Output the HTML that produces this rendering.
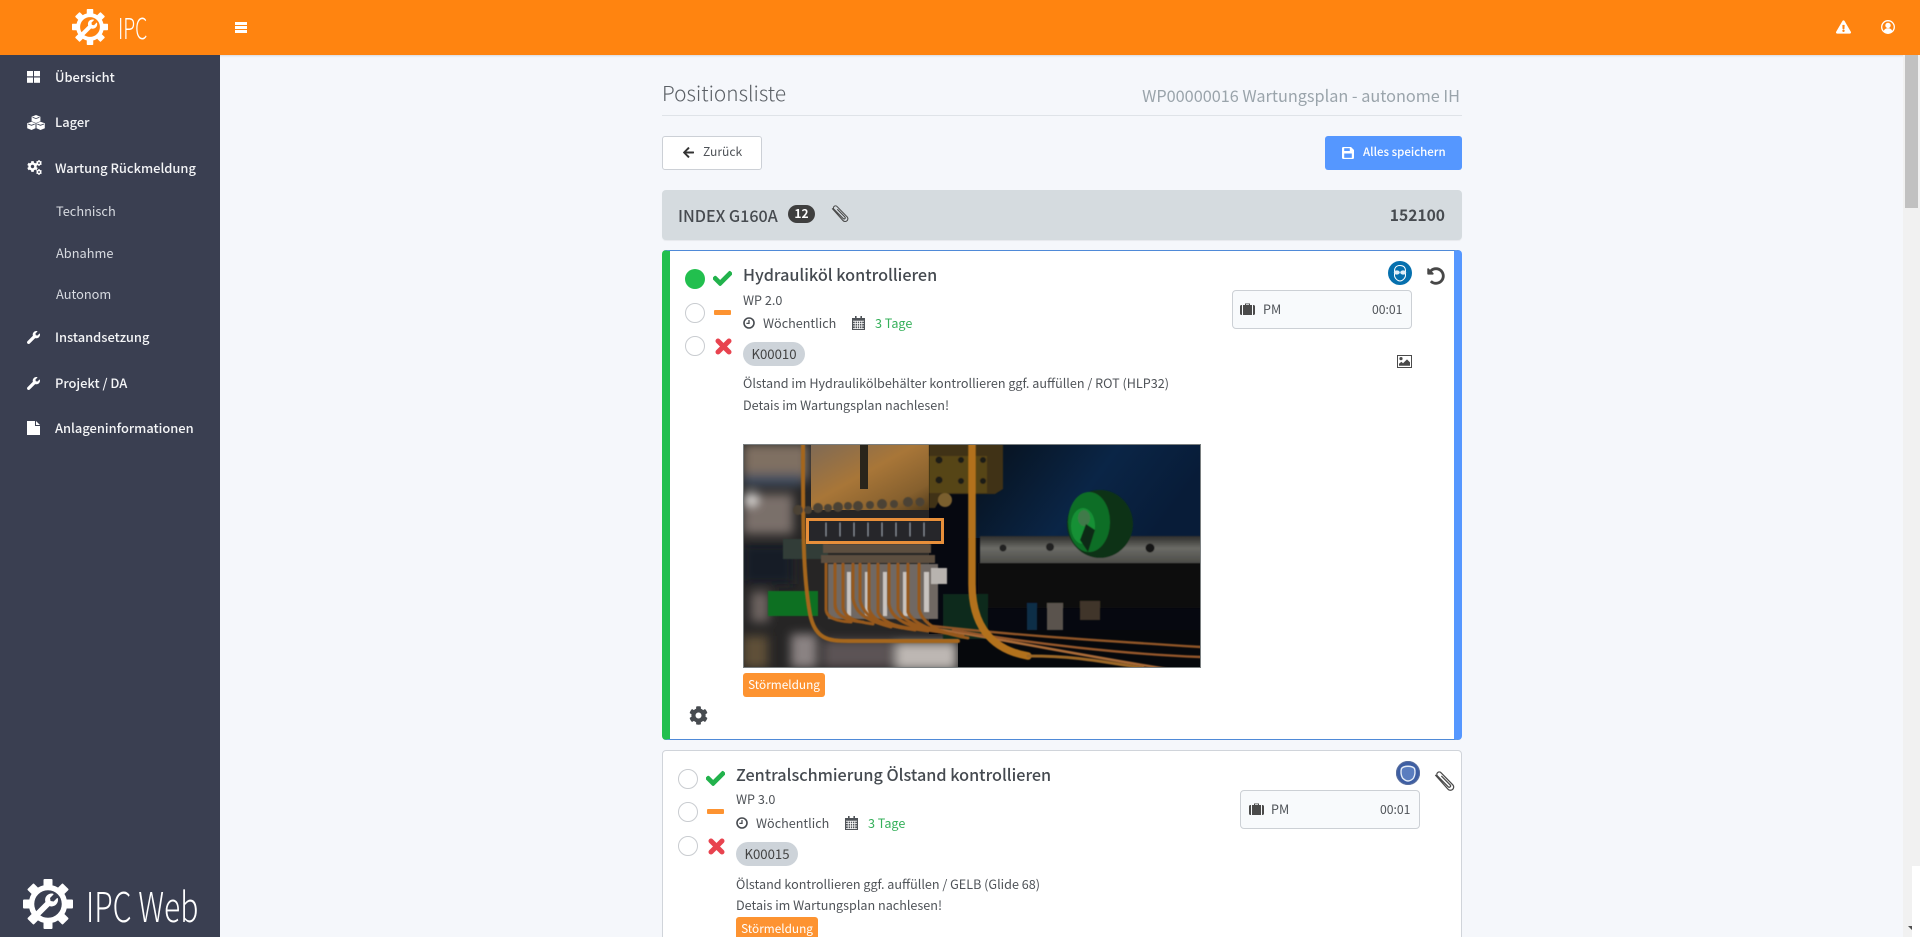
<!DOCTYPE html>
<html lang="de"><head><meta charset="utf-8"><title>Positionsliste</title>
<style>
html,body{margin:0;padding:0;width:1920px;height:937px;overflow:hidden;background:#f5f7fb}
body{font-family:"Noto Sans CJK JP","Liberation Sans",sans-serif;color:#4a4a4a;position:relative}
.a{position:absolute}
.t{position:absolute;white-space:nowrap;line-height:20px;height:20px}
svg{position:absolute;display:block;overflow:visible}
.nav{color:#f4f5f7;font-size:12.9px;font-weight:500}
.sub{color:#d8dbe1;font-size:12.8px}
.s13{font-size:12.6px;color:#4f5358}
.radio{position:absolute;width:18px;height:18px;border:1px solid #c9ccd0;border-radius:50%;background:#fff}
.tag{position:absolute;width:62px;height:24px;border-radius:12px;background:#cdd3d9;color:#444;font-size:13.2px;line-height:24px;text-align:center}
.stor{position:absolute;width:82px;height:24px;border-radius:3px;background:#fd9331;color:#fff;font-size:11.8px;line-height:23px;text-align:center}
.pm{position:absolute;width:178px;height:37px;border:1px solid #ccd0d5;border-radius:4px;background:#f8fafc}
</style></head><body>
<svg width="0" height="0" style="position:absolute">
<defs>
<symbol id="wrench" viewBox="0 0 512 512"><path d="M507.73 109.1c-2.24-9.03-13.54-12.09-20.12-5.51l-74.36 74.36-67.88-11.31-11.31-67.88 74.36-74.36c6.62-6.62 3.43-17.9-5.66-20.16-47.38-11.74-99.55.91-136.58 37.93-39.64 39.64-50.55 97.1-34.05 147.2L18.74 402.76c-24.99 24.99-24.99 65.51 0 90.5 24.99 24.99 65.51 24.99 90.5 0l213.21-213.21c50.12 16.71 107.47 5.68 147.37-34.22 37.07-37.07 49.7-89.32 37.91-136.73z"/></symbol>
<symbol id="check" viewBox="0 0 512 512"><path d="M173.898 439.404l-166.4-166.4c-9.997-9.997-9.997-26.206 0-36.204l36.203-36.204c9.997-9.998 26.207-9.998 36.204 0L192 312.69 432.095 72.596c9.997-9.997 26.207-9.997 36.204 0l36.203 36.204c9.997 9.997 9.997 26.206 0 36.204l-294.4 294.401c-9.998 9.997-26.207 9.997-36.204-.001z"/></symbol>
<symbol id="cog" viewBox="0 0 512 512"><path d="M487.4 315.7l-42.6-24.6c4.3-23.2 4.3-47 0-70.2l42.6-24.6c4.9-2.8 7.1-8.6 5.5-14-11.1-35.6-30-67.8-54.7-94.6-3.8-4.1-10-5.1-14.8-2.3L380.8 110c-17.9-15.4-38.5-27.3-60.8-35.1V25.8c0-5.6-3.9-10.5-9.4-11.7-36.7-8.2-74.3-7.8-109.2 0-5.5 1.2-9.4 6.1-9.4 11.7V75c-22.2 7.9-42.8 19.8-60.8 35.1L88.7 85.5c-4.9-2.8-11-1.9-14.8 2.3-24.7 26.7-43.6 58.9-54.7 94.6-1.7 5.4.6 11.2 5.5 14L67.3 221c-4.3 23.2-4.3 47 0 70.2l-42.6 24.6c-4.9 2.8-7.1 8.6-5.5 14 11.1 35.6 30 67.8 54.7 94.6 3.8 4.1 10 5.1 14.8 2.3l42.6-24.6c17.9 15.4 38.5 27.3 60.8 35.1v49.2c0 5.6 3.9 10.5 9.4 11.7 36.7 8.2 74.3 7.8 109.2 0 5.5-1.2 9.4-6.1 9.4-11.7v-49.2c22.2-7.9 42.8-19.8 60.8-35.1l42.6 24.6c4.9 2.8 11 1.9 14.8-2.3 24.7-26.7 43.6-58.9 54.7-94.6 1.5-5.5-.7-11.3-5.6-14.1zM256 336c-44.1 0-80-35.9-80-80s35.9-80 80-80 80 35.9 80 80-35.9 80-80 80z"/></symbol>
<symbol id="undo" viewBox="0 0 512 512"><path d="M255.545 8c-66.269.119-126.438 26.233-170.86 68.685L48.971 40.971C33.851 25.851 8 36.559 8 57.941V192c0 13.255 10.745 24 24 24h134.059c21.382 0 32.09-25.851 16.971-40.971l-41.75-41.75c30.864-28.899 70.801-44.907 113.23-45.273 92.398-.798 170.283 73.977 169.484 169.442C423.236 348.009 349.816 424 256 424c-41.127 0-79.997-14.678-110.63-41.556-4.743-4.161-11.906-3.908-16.368.553L89.34 422.659c-4.872 4.872-4.631 12.815.482 17.433C133.798 479.813 192.074 504 256 504c136.966 0 247.999-111.033 248-247.998C504.001 119.193 392.354 7.755 255.545 8z"/></symbol>
<symbol id="warn" viewBox="0 0 576 512"><path d="M569.517 440.013C587.975 472.007 564.806 512 527.94 512H48.054c-36.937 0-59.999-40.055-41.577-71.987L246.423 24c18.467-32.009 64.72-31.951 83.154 0l239.94 416.013zM288 354c-25.405 0-46 20.595-46 46s20.595 46 46 46 46-20.595 46-46-20.595-46-46-46zm-43.673-165.346l7.418 136c.347 6.364 5.609 11.346 11.982 11.346h48.546c6.373 0 11.635-4.982 11.982-11.346l7.418-136c.375-6.874-5.098-12.654-11.982-12.654h-63.383c-6.884 0-12.356 5.78-11.981 12.654z"/></symbol>
<symbol id="back" viewBox="0 0 448 512"><path d="M257.5 445.1l-22.2 22.2c-9.4 9.4-24.6 9.4-33.9 0L7 273c-9.4-9.4-9.4-24.6 0-33.9L201.4 44.7c9.4-9.4 24.6-9.4 33.9 0l22.2 22.2c9.5 9.5 9.3 25-.4 34.3L136.6 216H424c13.3 0 24 10.7 24 24v32c0 13.3-10.7 24-24 24H136.6l120.5 114.8c9.8 9.3 10 24.8.4 34.3z"/></symbol>
<symbol id="clip" viewBox="0 0 16 16"><path fill="none" stroke="currentColor" stroke-width=".95" d="M1 3 L10.6 13.8 A2.4 2.4 0 0 0 14.4 10.6 L5.4 1.4 A1.8 1.8 0 0 0 2.6 3.8 L10.8 12 A.9.9 0 0 0 12.4 10.7 L5.6 3.8"/></symbol>
<symbol id="clock" viewBox="0 0 12 12"><circle cx="6" cy="6" r="5" fill="none" stroke="currentColor" stroke-width="1.6"/><path d="M6 3v3.4H3.4" fill="none" stroke="currentColor" stroke-width="1.3"/></symbol>
<symbol id="cal" viewBox="0 0 13 14"><path fill="currentColor" d="M0 2h3V0h1.6v2h3.8V0H10v2h3v12H0z"/><path stroke="#fff" stroke-width=".8" d="M1 5.2h11M1 7.6h11M1 10h11M1 12.4h11M3.2 5v8M5.4 5v8M7.6 5v8M9.8 5v8" fill="none"/></symbol>
<symbol id="bag" viewBox="0 0 15 12"><path fill="currentColor" d="M5 2V.5h5V2h-1V1.3H6V2zM3 2h9v10H3zM0 3.4C0 2.6.6 2 1.4 2H2v10h-.6C.6 12 0 11.4 0 10.6zM13 2h.6c.8 0 1.4.6 1.4 1.4v7.2c0 .8-.6 1.4-1.4 1.4H13z"/></symbol>
<symbol id="pic" viewBox="0 0 15 13"><path fill="#4a4a4a" d="M0 0h15v13H0z"/><path fill="#fff" d="M1 1h13v11H1z"/><circle cx="4" cy="3.6" r="1.6" fill="#4a4a4a"/><path fill="#4a4a4a" d="M2 10.8V8.8l2.4-2 1.6 1.4L10 4.4l3 3v3.4z"/></symbol>
<symbol id="gear" viewBox="-50 -50 100 100">
<g fill="#fff"><rect x="-9" y="-50" width="18" height="14" rx="2"/><rect x="-9" y="-50" width="18" height="14" rx="2" transform="rotate(45)"/><rect x="-9" y="-50" width="18" height="14" rx="2" transform="rotate(90)"/><rect x="-9" y="-50" width="18" height="14" rx="2" transform="rotate(135)"/><rect x="-9" y="-50" width="18" height="14" rx="2" transform="rotate(180)"/><rect x="-9" y="-50" width="18" height="14" rx="2" transform="rotate(225)"/><rect x="-9" y="-50" width="18" height="14" rx="2" transform="rotate(270)"/><rect x="-9" y="-50" width="18" height="14" rx="2" transform="rotate(315)"/></g>
<circle r="33" fill="none" stroke="#fff" stroke-width="11"/>
<path fill="#fff" transform="translate(-26,-21) scale(.09)" d="M507.73 109.1c-2.24-9.03-13.54-12.09-20.12-5.51l-74.36 74.36-67.88-11.31-11.31-67.88 74.36-74.36c6.62-6.62 3.43-17.9-5.66-20.16-47.38-11.74-99.55.91-136.58 37.93-39.64 39.64-50.55 97.1-34.05 147.2L18.74 402.76c-24.99 24.99-24.99 65.51 0 90.5 24.99 24.99 65.51 24.99 90.5 0l213.21-213.21c50.12 16.71 107.47 5.68 147.37-34.22 37.07-37.07 49.7-89.32 37.91-136.73z"/>
</symbol>
<filter id="b1" x="-5%" y="-5%" width="110%" height="110%"><feGaussianBlur stdDeviation=".6"/></filter>
<filter id="b4" x="-30%" y="-30%" width="160%" height="160%"><feGaussianBlur stdDeviation="5"/></filter>
<linearGradient id="brass" x1="0" y1="0" x2="1" y2="1"><stop offset="0" stop-color="#7f6a55"/><stop offset=".45" stop-color="#a87638"/><stop offset=".8" stop-color="#86602e"/><stop offset="1" stop-color="#523c1c"/></linearGradient>
<linearGradient id="darkblue" x1="0" y1="0" x2="1" y2=".3"><stop offset="0" stop-color="#070f18"/><stop offset=".6" stop-color="#0a2546"/><stop offset="1" stop-color="#081c38"/></linearGradient>
<linearGradient id="strip" x1="0" y1="0" x2="0" y2="1"><stop offset="0" stop-color="#2e2e2c"/><stop offset=".45" stop-color="#6b6b66"/><stop offset="1" stop-color="#4c4c48"/></linearGradient>
</defs></svg>

<!-- header -->
<div class="a" style="left:0;top:0;width:1920px;height:55px;background:#ff8410;box-shadow:0 1px 2px rgba(0,0,0,.12)"></div>
<svg style="left:72px;top:9px" width="36" height="36"><use href="#gear" width="36" height="36"/></svg>
<div class="t" style="left:118px;top:14px;height:26px;line-height:26px;font-size:29px;font-weight:300;color:#fff;transform:scaleX(.67);transform-origin:0 50%">IPC</div>
<div class="a" style="left:235px;top:22px;width:12px;height:2.5px;background:#fff"></div>
<div class="a" style="left:235px;top:26px;width:12px;height:2.5px;background:#fff"></div>
<div class="a" style="left:235px;top:30px;width:12px;height:2.5px;background:#fff"></div>
<svg style="left:1836px;top:20px;fill:#fff" width="15" height="14"><use href="#warn" width="15" height="14"/></svg>
<svg style="left:1881px;top:20px" width="14" height="14" viewBox="0 0 14 14"><circle cx="7" cy="7" r="6.3" fill="none" stroke="#fff" stroke-width="1.3"/><circle cx="7" cy="5.4" r="2.7" fill="#fff"/><path d="M2.6 11.4c.6-2.4 2.4-3.2 4.4-3.2s3.8.8 4.4 3.2C10 13 8.5 13.5 7 13.5S4 13 2.6 11.4z" fill="#fff"/></svg>

<!-- sidebar -->
<div class="a" style="left:0;top:55px;width:220px;height:882px;background:#3a3f51"></div>
<svg style="left:27px;top:71px;fill:#fff" width="13" height="12"><rect width="6" height="5.3"/><rect x="7" width="6" height="5.3"/><rect y="6.5" width="6" height="5.3"/><rect x="7" y="6.5" width="6" height="5.3"/></svg>
<div class="t nav" style="left:55px;top:67px">Übersicht</div>
<svg style="left:27px;top:115px;fill:#fff" width="18" height="15" viewBox="0 0 18 15"><path d="M9 0l4.400 1.700v4.600L9 8 4.600 6.300V1.700zM4.500 6.700l4 1.600v4.900l-4 1.800-4.300-1.800V8.300zM13.500 6.700l4.300 1.600v4.900l-4.300 1.800-4-1.800V8.300z"/><path d="M5.600 2.300l3.400 1.300 3.400-1.300M1 9l3.500 1.300 3.300-1.300M10.200 9l3.300 1.300 3.500-1.300" fill="none" stroke="#3a3f51" stroke-width=".8"/></svg>
<div class="t nav" style="left:55px;top:112px">Lager</div>
<svg style="left:27px;top:161px;fill:#fff" width="11" height="11"><use href="#cog" width="11" height="11"/></svg>
<svg style="left:36px;top:160px;fill:#fff" width="6" height="6"><use href="#cog" width="6" height="6"/></svg>
<svg style="left:36px;top:169px;fill:#fff" width="6" height="6"><use href="#cog" width="6" height="6"/></svg>
<div class="t nav" style="left:55px;top:158px">Wartung Rückmeldung</div>
<div class="t sub" style="left:56px;top:201px">Technisch</div>
<div class="t sub" style="left:56px;top:243px">Abnahme</div>
<div class="t sub" style="left:56px;top:284px">Autonom</div>
<svg style="left:27px;top:331px;fill:#fff" width="13" height="13"><use href="#wrench" width="13" height="13"/></svg>
<div class="t nav" style="left:55px;top:327px">Instandsetzung</div>
<svg style="left:27px;top:377px;fill:#fff" width="13" height="13"><use href="#wrench" width="13" height="13"/></svg>
<div class="t nav" style="left:55px;top:373px">Projekt / DA</div>
<svg style="left:27px;top:421px;fill:#fff" width="13" height="14" viewBox="0 0 13 14"><path d="M0 0h8v5h5v9H0zM9 0l4 4H9z"/></svg>
<div class="t nav" style="left:55px;top:418px">Anlageninformationen</div>
<svg style="left:23px;top:879px" width="50" height="50"><use href="#gear" width="50" height="50"/></svg>
<div class="t" style="left:86px;top:884px;height:40px;line-height:40px;font-size:41px;font-weight:300;color:#fff;transform:scaleX(.735);transform-origin:0 50%">IPC Web</div>

<!-- page head -->
<div class="t" style="left:662px;top:77px;height:30px;line-height:30px;font-size:20.8px;font-weight:300;color:#5b6066">Positionsliste</div>
<div class="t" style="right:460px;top:84px;height:22px;line-height:22px;font-size:16.25px;color:#9aa4ab">WP00000016 Wartungsplan - autonome IH</div>
<div class="a" style="left:662px;top:115px;width:800px;height:1px;background:#dfe3e8"></div>

<div class="a" style="left:662px;top:136px;width:98px;height:32px;background:#fff;border:1px solid #ccd0d6;border-radius:3px"></div>
<svg style="left:683px;top:146px;fill:#333" width="11" height="13"><use href="#back" width="11" height="13"/></svg>
<div class="t" style="left:703px;top:142px;font-size:12.1px;color:#4f5358">Zurück</div>

<div class="a" style="left:1325px;top:136px;width:137px;height:34px;background:#5597ff;border-radius:3px"></div>
<svg style="left:1342px;top:147px" width="12" height="12" viewBox="0 0 12 12"><path fill="#fff" d="M0 1.200C0 .5.5 0 1.200 0H9L12 3v7.800c0 .7-.5 1.200-1.200 1.200H1.200C.5 12 0 11.500 0 10.800z"/><rect x="2.200" y="1.200" width="5.600" height="2.800" fill="#5597ff"/><rect x="2.200" y="6.500" width="7.600" height="4.300" fill="#5597ff"/></svg>
<div class="t" style="left:1363px;top:142px;font-size:11.5px;color:#fff;font-weight:500">Alles speichern</div>

<!-- group bar -->
<div class="a" style="left:662px;top:190px;width:800px;height:50px;background:#d5dbdf;border-radius:4px;box-shadow:0 1px 1px rgba(0,0,0,.06)"></div>
<div class="t" style="left:678px;top:205px;font-size:16.1px;font-weight:500;color:#474b50">INDEX G160A</div>
<div class="a" style="left:788px;top:205px;width:27px;height:18px;border-radius:9px;background:#3f3f3f;color:#fff;font-size:12px;font-weight:700;line-height:17px;text-align:center">12</div>
<svg style="left:831px;top:205px;color:#4a4a4a" width="18" height="18"><use href="#clip" width="18" height="18"/></svg>
<div class="t" style="right:475px;top:205px;font-size:15.6px;font-weight:700;color:#474b50">152100</div>

<!-- card 1 -->
<div class="a" style="left:662px;top:250px;width:784px;height:488px;background:#fff;border:1px solid #4f8ad8;border-left:8px solid #22bf4e;border-right:8px solid #5597ff;border-radius:4px"></div>
<div class="a" style="left:685px;top:269px;width:20px;height:20px;border-radius:50%;background:#22bf4e"></div>
<svg style="left:713px;top:269px;fill:#22b24c;stroke:#22b24c;stroke-width:24" width="19" height="19"><use href="#check" width="19" height="19"/></svg>
<div class="radio" style="left:685px;top:303px"></div>
<div class="a" style="left:714px;top:310px;width:17px;height:5px;background:#fd9331;border-radius:1px"></div>
<div class="radio" style="left:685px;top:336px"></div>
<svg style="left:714.5px;top:338px" width="17" height="17" viewBox="0 0 17 17"><path d="M3 3L14 14M14 3L3 14" stroke="#e8434f" stroke-width="5" stroke-linecap="round"/></svg>
<div class="t" style="left:743px;top:264px;font-size:16.2px;font-weight:500;color:#454a50">Hydrauliköl kontrollieren</div>
<div class="t s13" style="left:743px;top:290px">WP 2.0</div>
<svg style="left:743px;top:317px;color:#474b50" width="12" height="12"><use href="#clock" width="12" height="12"/></svg>
<div class="t s13" style="left:763px;top:313px">Wöchentlich</div>
<svg style="left:852px;top:316px;color:#4f5358" width="13" height="14"><use href="#cal" width="13" height="14"/></svg>
<div class="t" style="left:875px;top:313px;font-size:12.6px;color:#35b05a">3 Tage</div>
<div class="tag" style="left:743px;top:342px">K00010</div>
<div class="t s13" style="left:743px;top:373px">Ölstand im Hydraulikölbehälter kontrollieren ggf. auffüllen / ROT (HLP32)</div>
<div class="t s13" style="left:743px;top:395px">Detais im Wartungsplan nachlesen!</div>

<!-- photo -->
<svg style="left:743px;top:444px" width="458" height="224" viewBox="0 0 458 224">
<clipPath id="ph"><rect width="458" height="224"/></clipPath>
<g clip-path="url(#ph)">
<rect width="458" height="224" fill="#262525"/>
<g filter="url(#b4)">
<rect x="0" y="0" width="65" height="36" fill="#7f6f62"/>
<rect x="0" y="30" width="60" height="12" fill="#3f4d60"/>
<rect x="0" y="50" width="50" height="40" fill="#7a706a"/>
<ellipse cx="8" cy="55" rx="6" ry="6" fill="#f2efec"/>
<rect x="0" y="100" width="50" height="40" fill="#161e25"/>
<rect x="8" y="148" width="18" height="30" fill="#6d6460"/>
<rect x="0" y="192" width="25" height="32" fill="#5f5038"/>
<rect x="48" y="190" width="26" height="34" fill="#8a8282"/>
<rect x="80" y="196" width="70" height="28" fill="#5c5254"/>
<rect x="152" y="198" width="62" height="28" fill="#bdb7b3"/>
</g>
<rect x="68" y="0" width="118" height="66" fill="url(#brass)"/>
<rect x="117" y="0" width="8" height="45" fill="#2a251b"/>
<rect x="186" y="0" width="272" height="190" fill="#060810"/>
<rect x="215" y="186" width="243" height="38" fill="#06080c"/>
<rect x="225" y="0" width="233" height="94" fill="url(#darkblue)"/>
<g filter="url(#b1)">
<path d="M186 0H260v45l-8 5h-52l-8 14h-6z" fill="#3f3314"/>
<rect x="186" y="12" width="58" height="37" fill="#574518"/>
<circle cx="196" cy="16" r="3.5" fill="#1d1a14"/><circle cx="218" cy="16" r="3" fill="#1d1a14"/><circle cx="240" cy="16" r="3" fill="#1d1a14"/><circle cx="196" cy="36" r="3.5" fill="#1d1a14"/><circle cx="218" cy="37" r="3" fill="#1d1a14"/><circle cx="240" cy="37" r="3" fill="#1d1a14"/>
<circle cx="202" cy="56" r="7" fill="#7a5f2f"/>
<rect x="237" y="92" width="221" height="27" fill="url(#strip)"/>
<circle cx="260" cy="104" r="3.5" fill="#222"/><circle cx="307" cy="103" r="4" fill="#222"/><circle cx="407" cy="104" r="4.5" fill="#161615"/>
<rect x="235" y="119" width="223" height="45" fill="#090b0e"/>
<rect x="337" y="157" width="20" height="19" fill="#40362c"/>
<rect x="304" y="159" width="16" height="27" fill="#5a534e"/>
<rect x="284" y="159" width="10" height="27" fill="#0a2e46"/>
<ellipse cx="357" cy="80" rx="33" ry="34" fill="#0a3318"/>
<ellipse cx="346" cy="78" rx="21" ry="30" fill="#0d6e28"/>
<ellipse cx="340" cy="82" rx="12" ry="18" fill="#179036"/>
<ellipse cx="341" cy="74" rx="6" ry="8" fill="#3f7a48"/>
<path d="M343 80l9 6-7 22-8-12z" fill="#0a2c14"/>
<rect x="25" y="147" width="50" height="25" fill="#0d6f24"/>
<rect x="40" y="95" width="45" height="20" fill="#333c38"/>
<rect x="85" y="120" width="110" height="55" fill="#6f6863"/>
<g fill="#c8c3bf"><rect x="104" y="128" width="4" height="44"/><rect x="122" y="128" width="4" height="44"/><rect x="140" y="128" width="4" height="44"/><rect x="160" y="128" width="5" height="44"/><rect x="181" y="128" width="5" height="40"/></g>
<rect x="188" y="124" width="16" height="16" fill="#b8b3af"/>
<rect x="200" y="150" width="45" height="45" fill="#082c1c"/>
</g>
<g filter="url(#b1)" fill="none" stroke-linecap="round">
<path d="M60 0 C60 90 60 130 67 170 C72 195 85 197 105 197 L215 197" stroke="#a5661a" stroke-width="4"/>
<path d="M190 182C260 190 330 195 458 203" stroke="#8f5526" stroke-width="2.4"/>
<path d="M180 183C260 195 340 212 430 226" stroke="#a96b38" stroke-width="2.6"/>
<path d="M210 186C290 200 380 210 458 213" stroke="#94562a" stroke-width="2.4"/>
<path d="M229 0V140C229 178 245 205 285 212" stroke="#b2711a" stroke-width="7.5"/>
<path d="M285 212C330 212 350 216 400 224" stroke="#9c6828" stroke-width="3"/>
<g stroke="#96581c" stroke-width="3">
<path d="M83 120V165C83 172 90 177 108 178"/>
<path d="M92 120V160C92 170 102 177 120 178"/>
<path d="M100 120V164C102 175 115 178 130 180"/>
<path d="M110 120V154C112 170 125 177 148 183"/>
<path d="M117 120V156C120 172 135 180 160 184"/>
<path d="M126 120V165C130 178 145 182 172 186"/>
<path d="M135 120V168C140 180 155 183 185 187"/>
<path d="M146 120V160C148 175 165 184 198 188"/>
<path d="M155 120V165C160 178 178 186 210 190"/>
<path d="M165 120V168C170 180 190 188 220 192"/>
<path d="M176 120V165C180 182 200 190 225 194"/>
</g>
<g fill="#5d5040" stroke="none">
<path d="M80 100H188V109H80z"/><path d="M78 111H192V119H78z"/>
</g>
<g stroke="none" fill="#4c4235">
<circle cx="55" cy="66" r="5"/><circle cx="65" cy="66" r="4"/><circle cx="75" cy="64" r="5"/><circle cx="85" cy="64" r="4"/><circle cx="95" cy="63" r="5"/><circle cx="105" cy="62" r="4"/><circle cx="115" cy="62" r="5"/><circle cx="127" cy="61" r="4"/><circle cx="139" cy="60" r="5"/><circle cx="151" cy="60" r="4"/><circle cx="165" cy="58" r="5"/><circle cx="177" cy="58" r="4.5"/>
</g>
<rect x="66" y="77" width="132" height="20" fill="#25252c" stroke="none"/>
<g stroke="#8a9098" stroke-width="1"><path d="M83 79V92M97 79V92M111 79V92M125 79V92M139 79V92M153 79V92M167 79V92M181 79V92"/></g>
</g>
<rect x="64.5" y="75.5" width="135" height="23" fill="none" stroke="#e88f3a" stroke-width="3"/>
</g>
<rect x=".5" y=".5" width="457" height="223" fill="none" stroke="#7a7f80" stroke-width="1"/>
</svg>
<div class="stor" style="left:743px;top:673px">Störmeldung</div>
<svg style="left:689px;top:706px;fill:#474b50" width="19" height="19"><use href="#cog" width="19" height="19"/></svg>

<!-- safety icon 1 -->
<svg style="left:1388px;top:261px" width="24" height="24" viewBox="0 0 24 24"><circle cx="12" cy="12" r="12" fill="#0670ae"/><path d="M6.500 10C6.500 6 9 4.500 12 4.500S17.500 6 17.500 10v4.500c0 2.500-3 5.500-5.500 5.500s-5.500-3-5.500-5.500z" fill="none" stroke="#fff" stroke-width="1"/><ellipse cx="8.800" cy="11.500" rx="3" ry="2.100" fill="#dfeef8"/><ellipse cx="15.200" cy="11.500" rx="3" ry="2.100" fill="#dfeef8"/></svg>
<svg style="left:1427px;top:267px;fill:#474747" width="18" height="18"><use href="#undo" width="18" height="18"/></svg>
<div class="pm" style="left:1232px;top:290px"></div>
<svg style="left:1240px;top:303px;color:#4a4a4a" width="15" height="12"><use href="#bag" width="15" height="12"/></svg>
<div class="t s13" style="left:1263px;top:299px">PM</div>
<div class="t" style="left:1372px;top:299px;font-size:12.2px;color:#4f5358">00:01</div>
<svg style="left:1397px;top:355px" width="15" height="13"><use href="#pic" width="15" height="13"/></svg>

<!-- card 2 -->
<div class="a" style="left:662px;top:750px;width:798px;height:200px;background:#fff;border:1px solid #d0d4da;border-radius:4px"></div>
<div class="radio" style="left:678px;top:769px"></div>
<svg style="left:706px;top:769px;fill:#22b24c;stroke:#22b24c;stroke-width:24" width="19" height="19"><use href="#check" width="19" height="19"/></svg>
<div class="radio" style="left:678px;top:802px"></div>
<div class="a" style="left:707px;top:809px;width:17px;height:5px;background:#fd9331;border-radius:1px"></div>
<div class="radio" style="left:678px;top:836px"></div>
<svg style="left:707.5px;top:838px" width="17" height="17" viewBox="0 0 17 17"><path d="M3 3L14 14M14 3L3 14" stroke="#e8434f" stroke-width="5" stroke-linecap="round"/></svg>
<div class="t" style="left:736px;top:764px;font-size:16.2px;font-weight:500;color:#454a50">Zentralschmierung Ölstand kontrollieren</div>
<div class="t s13" style="left:736px;top:789px">WP 3.0</div>
<svg style="left:736px;top:817px;color:#474b50" width="12" height="12"><use href="#clock" width="12" height="12"/></svg>
<div class="t s13" style="left:756px;top:813px">Wöchentlich</div>
<svg style="left:845px;top:816px;color:#4f5358" width="13" height="14"><use href="#cal" width="13" height="14"/></svg>
<div class="t" style="left:868px;top:813px;font-size:12.6px;color:#35b05a">3 Tage</div>
<div class="tag" style="left:736px;top:842px">K00015</div>
<div class="t s13" style="left:736px;top:874px">Ölstand kontrollieren ggf. auffüllen / GELB (Glide 68)</div>
<div class="t s13" style="left:736px;top:895px">Detais im Wartungsplan nachlesen!</div>
<div class="stor" style="left:736px;top:917px">Störmeldung</div>
<svg style="left:1396px;top:761px" width="24" height="24" viewBox="0 0 24 24"><circle cx="12" cy="12" r="12" fill="#3d5ea3"/><circle cx="12" cy="12" r="11.5" fill="none" stroke="#5a6f9e"/><path d="M5.500 7.500C8 4.500 16 4.500 18.500 7.500c1 3 .5 7-1 9.500-1 1.500-3.500 3-5.500 3S8 18.500 6.500 17c-1.500-2.500-2-6.500-1-9.500z" fill="#5a7dbf" stroke="#e4ecf7" stroke-width="1.400"/></svg>
<svg style="left:1434px;top:771px;color:#4a4a4a" width="21" height="21"><use href="#clip" width="21" height="21"/></svg>
<div class="pm" style="left:1240px;top:790px"></div>
<svg style="left:1249px;top:803px;color:#4a4a4a" width="15" height="12"><use href="#bag" width="15" height="12"/></svg>
<div class="t s13" style="left:1271px;top:799px">PM</div>
<div class="t" style="left:1380px;top:799px;font-size:12.2px;color:#4f5358">00:01</div>

<!-- scrollbar -->
<div class="a" style="left:1903px;top:55px;width:17px;height:882px;background:#f1f1f1"></div>
<div class="a" style="left:1905px;top:55px;width:13px;height:153px;background:#c1c1c1"></div>
<div class="a" style="left:1912px;top:866px;width:8px;height:71px;background:#fff"></div>
<svg style="left:1908px;top:926px" width="4" height="4"><path d="M0 0h4v4z" fill="#505050"/></svg>
</body></html>
